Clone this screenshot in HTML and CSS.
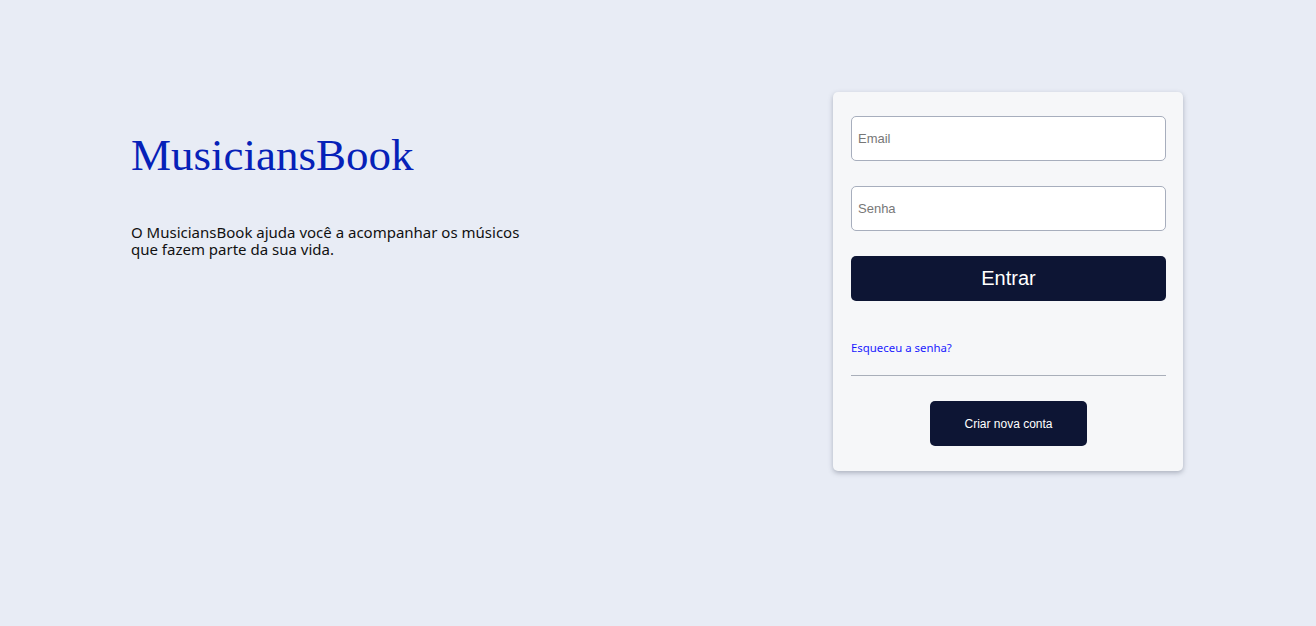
FILE: index.html
```html
<!DOCTYPE html>
<html lang="pt-BR">
<head>
<meta charset="utf-8">
<title>MusiciansBook</title>
<link rel="stylesheet" href="styles.css">
</head>
<body>
<main class="page">
  <section class="intro">
    <h1 class="brand">MusiciansBook</h1>
    <p class="tagline">O MusiciansBook ajuda você a acompanhar os músicos que fazem parte da sua vida.</p>
  </section>
  <section class="card">
    <form class="login">
      <input class="field" type="email" placeholder="Email">
      <input class="field" type="password" placeholder="Senha">
      <button class="btn-primary" type="button">Entrar</button>
    </form>
    <a class="forgot" href="#">Esqueceu a senha?</a>
    <hr class="divider">
    <div class="create-wrap">
      <button class="btn-create" type="button">Criar nova conta</button>
    </div>
  </section>
</main>
</body>
</html>
```
FILE: styles.css
```css
* { box-sizing: border-box; }
html, body { margin: 0; }
body {
  background: #e8ecf5;
  min-height: 626px;
  font-family: "Liberation Sans", Arial, sans-serif;
}
.page {
  padding: 92px 133px 0 131px;
  display: flex;
  justify-content: space-between;
  align-items: flex-start;
}
.intro {
  padding-top: 35px;
  width: 420px;
}
.brand {
  margin: 0;
  font-family: "Liberation Serif", "Times New Roman", serif;
  font-weight: normal;
  font-size: 45px;
  line-height: 56px;
  color: #0621b8;
}
.tagline {
  margin: 41px 0 0;
  font-family: "Noto Sans", sans-serif;
  font-size: 15px;
  line-height: 17px;
  color: #111;
  width: 400px;
}
.card {
  width: 350px;
  background: #f6f7f9;
  border-radius: 5px;
  box-shadow: 0 2px 5px rgba(60, 70, 90, 0.35);
  padding: 24px 17px 25px 18px;
}
.login {
  display: flex;
  flex-direction: column;
  gap: 25px;
}
.field {
  display: block;
  width: 315px;
  height: 45px;
  border: 1px solid #a7aebd;
  border-radius: 5px;
  background: #fff;
  padding: 0 6px;
  font-family: "Liberation Sans", Arial, sans-serif;
  font-size: 13px;
  color: #222;
}
.field::placeholder { color: #777; }
.btn-primary {
  width: 315px;
  height: 45px;
  border: none;
  border-radius: 5px;
  background: #0d1534;
  color: #fff;
  font-family: "Liberation Sans", Arial, sans-serif;
  font-size: 20px;
}
.forgot {
  display: block;
  margin-top: 39px;
  font-family: "Noto Sans", sans-serif;
  font-size: 11.4px;
  line-height: 16px;
  color: #1a1aff;
  text-decoration: none;
}
.divider {
  width: 315px;
  margin: 19px 0 0;
  border: none;
  border-top: 1px solid #a9afba;
}
.create-wrap {
  display: flex;
  justify-content: center;
  margin-top: 25px;
}
.btn-create {
  width: 157px;
  height: 45px;
  border: none;
  border-radius: 5px;
  background: #0d1534;
  color: #fff;
  font-family: "Liberation Sans", Arial, sans-serif;
  font-size: 12px;
}
```
